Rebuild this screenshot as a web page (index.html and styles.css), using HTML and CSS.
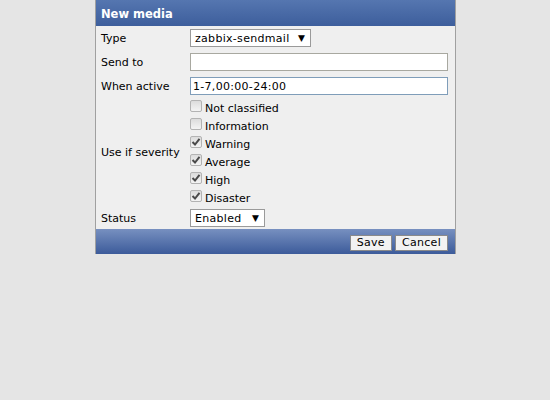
FILE: index.html
```html
<!DOCTYPE html>
<html>
<head>
<meta charset="utf-8">
<link rel="stylesheet" href="styles.css">
</head>
<body>
<div class="dialog">
  <div class="header">New media</div>
  <div class="form">
    <div class="label row24">Type</div>
    <div class="field row24"><div class="select sel-type"><span class="val">zabbix-sendmail</span><span class="arrow">▼</span></div></div>

    <div class="label row24">Send to</div>
    <div class="field row24"><div class="input"></div></div>

    <div class="label row24">When active</div>
    <div class="field row24"><div class="input focus"><span class="val">1-7,00:00-24:00</span></div></div>

    <div class="label sev">Use if severity</div>
    <div class="field checks">
      <div class="check"><span class="box"></span><span>Not classified</span></div>
      <div class="check"><span class="box"></span><span>Information</span></div>
      <div class="check"><span class="box on"><svg viewBox="0 0 10 10" width="10" height="10"><path d="M1.5 5 L4 7.5 L8.5 1.8" fill="none" stroke="#4a4a4a" stroke-width="2"/></svg></span><span>Warning</span></div>
      <div class="check"><span class="box on"><svg viewBox="0 0 10 10" width="10" height="10"><path d="M1.5 5 L4 7.5 L8.5 1.8" fill="none" stroke="#4a4a4a" stroke-width="2"/></svg></span><span>Average</span></div>
      <div class="check"><span class="box on"><svg viewBox="0 0 10 10" width="10" height="10"><path d="M1.5 5 L4 7.5 L8.5 1.8" fill="none" stroke="#4a4a4a" stroke-width="2"/></svg></span><span>High</span></div>
      <div class="check"><span class="box on"><svg viewBox="0 0 10 10" width="10" height="10"><path d="M1.5 5 L4 7.5 L8.5 1.8" fill="none" stroke="#4a4a4a" stroke-width="2"/></svg></span><span>Disaster</span></div>
    </div>

    <div class="label row23">Status</div>
    <div class="field row23"><div class="select sel-status"><span class="val">Enabled</span><span class="arrow">▼</span></div></div>
  </div>
  <div class="footer">
    <button class="btn">Save</button>
    <button class="btn">Cancel</button>
  </div>
</div>
</body>
</html>
```

FILE: styles.css
```css
html, body {
  margin: 0;
  padding: 0;
}
body {
  background: #e5e5e5;
  font-family: "DejaVu Sans", Verdana, sans-serif;
  font-size: 11px;
  color: #000;
  width: 550px;
  height: 400px;
}
.dialog {
  margin-left: 95px;
  width: 359px;
  background: #efefef;
  border-left: 1px solid #a0a0a0;
  border-right: 1px solid #a0a0a0;
}
.header {
  height: 26px;
  box-sizing: border-box;
  background: linear-gradient(#5576b0, #3d5e9c);
  color: #fff;
  font-weight: bold;
  font-size: 11.5px;
  padding-left: 5px;
  padding-top: 1px;
  line-height: 27px;
}
.form {
  display: grid;
  grid-template-columns: 94px 1fr;
}
.label {
  padding-left: 5px;
  padding-top: 1px;
  box-sizing: border-box;
  display: flex;
  align-items: center;
}
.field {
  display: flex;
  align-items: center;
  padding-right: 7px;
}
.row24 { height: 24px; }
.row23 { height: 23px; }
.val {
  letter-spacing: 0.3px;
  padding-top: 1px;
}
.select {
  height: 18px;
  box-sizing: border-box;
  background: #fff;
  border: 1px solid #9a9a9a;
  display: flex;
  align-items: center;
  justify-content: space-between;
  padding: 0 5px 0 4px;
}
.sel-type { width: 121px; }
.sel-status { width: 75px; }
.arrow { font-size: 9px; }
.input {
  flex: 1;
  height: 18px;
  box-sizing: border-box;
  background: #fff;
  border: 1px solid #a8a8a0;
  padding-left: 2px;
  display: flex;
  align-items: center;
}
.input.focus {
  border-color: #7f9db9;
}
.checks {
  display: flex;
  flex-direction: column;
  align-items: flex-start;
}
.check {
  height: 18px;
  box-sizing: border-box;
  padding-top: 2px;
  display: flex;
  align-items: center;
  gap: 3px;
}
.box {
  width: 12px;
  height: 12px;
  box-sizing: border-box;
  border: 1px solid #b3b3b3;
  border-radius: 2px;
  background: linear-gradient(#dcdcdc, #f4f4f4);
  display: flex;
  align-items: center;
  justify-content: center;
  margin-top: -5px;
}
.footer {
  height: 25px;
  box-sizing: border-box;
  background: linear-gradient(#7790c0, #3c5b9a);
  display: flex;
  justify-content: flex-end;
  align-items: center;
  gap: 3px;
  padding-right: 7px;
  padding-top: 2px;
}
.btn {
  font-family: "DejaVu Sans", Verdana, sans-serif;
  font-size: 11px;
  height: 16px;
  padding: 0 6px;
  background: #f2f2f2;
  border: 1px solid #8a8a8a;
  border-radius: 0;
  color: #000;
  line-height: 14px;
  letter-spacing: 0.3px;
}
```
